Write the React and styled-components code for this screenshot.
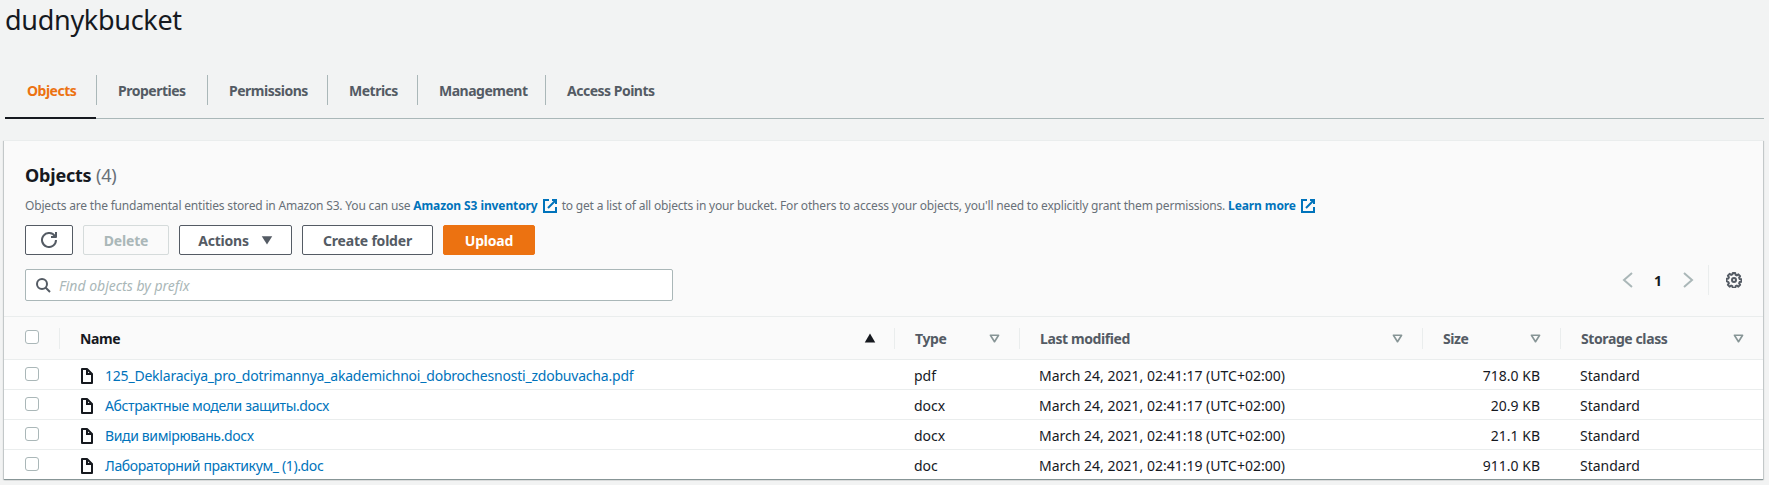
import styled, { createGlobalStyle } from "styled-components";

const GlobalStyle = createGlobalStyle`
  html, body {
    margin: 0;
    padding: 0;
    background: #f2f3f3;
    color: #16191f;
    font-family: "Noto Sans", "Open Sans", sans-serif;
    overflow: hidden;
  }
`;

const Page = styled.div`
  width: 1769px;
  height: 485px;
`;

const Title = styled.h1`
  margin: 0;
  padding-left: 5px;
  height: 64px;
  font-size: 27px;
  line-height: 40px;
  font-weight: 400;
  letter-spacing: -0.3px;
`;

const TabBar = styled.div`
  display: flex;
  margin: 0 5px 21px;
  height: 55px;
  padding-top: 11px;
  box-sizing: border-box;
  border-bottom: 1px solid #aab7b8;
`;

const Tab = styled.div`
  position: relative;
  display: flex;
  align-items: center;
  width: ${(p) => p.$width}px;
  height: 30px;
  padding-left: ${(p) => (p.$first ? 22 : 21)}px;
  box-sizing: border-box;
  font-size: 14px;
  font-weight: 700;
  letter-spacing: -0.5px;
  color: ${(p) => (p.$active ? "#ec7211" : "#545b64")};
  border-right: ${(p) => (p.$last ? "none" : "1px solid #aab7b8")};

  &::after {
    content: "";
    display: ${(p) => (p.$active ? "block" : "none")};
    position: absolute;
    left: 0;
    right: 0;
    bottom: -14px;
    height: 2px;
    background: #16191f;
  }
`;

const Panel = styled.section`
  margin-left: 4px;
  width: 1759px;
  height: 339px;
  box-sizing: border-box;
  background: #fafafa;
  border-top: 1px solid #eaeded;
  box-shadow: 0 1px 1px 0 rgba(0, 28, 36, 0.3), 1px 1px 1px 0 rgba(0, 28, 36, 0.15),
    -1px 1px 1px 0 rgba(0, 28, 36, 0.15);
`;

const PanelHead = styled.div`
  height: 175px;
  padding: 21px 0 0 21px;
  box-sizing: border-box;
`;

const Heading = styled.h2`
  margin: 0;
  font-size: 18px;
  line-height: 26px;
  font-weight: 700;
  letter-spacing: -0.2px;

  span {
    font-weight: 400;
    color: #687078;
  }
`;

const Description = styled.p`
  margin: 9px 0 0;
  display: flex;
  align-items: center;
  height: 18px;
  font-size: 12px;
  line-height: 18px;
  letter-spacing: -0.18px;
  color: #687078;
  white-space: pre;
`;

const LinkText = styled.a`
  color: #0073bb;
  font-weight: 700;
  letter-spacing: -0.1px;
  display: inline-flex;
  align-items: center;
  gap: 4px;
  margin-right: 4px;
`;

const Toolbar = styled.div`
  display: flex;
  gap: 10px;
  margin-top: 10px;
`;

const Button = styled.button`
  display: flex;
  align-items: center;
  justify-content: center;
  gap: 12px;
  width: ${(p) => p.$width}px;
  height: 30px;
  padding: 0;
  border-radius: 2px;
  font-family: inherit;
  font-size: 14px;
  font-weight: 700;
  letter-spacing: -0.2px;
  border: 1px solid ${(p) => (p.$primary ? "#ec7211" : p.$disabled ? "#d5dbdb" : "#545b64")};
  color: ${(p) => (p.$primary ? "#fff" : p.$disabled ? "#aab7b8" : "#545b64")};
  background: ${(p) => (p.$primary ? "#ec7211" : p.$disabled ? "#fafafa" : "#fff")};
`;

const FilterRow = styled.div`
  display: flex;
  align-items: flex-start;
  margin-top: 14px;
`;

const Search = styled.div`
  display: flex;
  align-items: center;
  gap: 8px;
  width: 648px;
  height: 32px;
  padding-left: 9px;
  box-sizing: border-box;
  background: #fff;
  border: 1px solid #aab7b8;
  border-radius: 2px;
  font-size: 14px;
  font-style: italic;
  color: #aab7b8;
`;

const Pager = styled.div`
  display: flex;
  align-items: center;
  margin-left: auto;
  margin-top: -4px;
  padding-right: 21px;
  color: #16191f;
`;

const PageNumber = styled.span`
  width: 44px;
  text-align: center;
  font-size: 14px;
  font-weight: 700;
`;

const PagerDivider = styled.span`
  width: 1px;
  height: 30px;
  margin: 0 17px 0 12px;
  background: #eaeded;
`;

const columns = "55px 835px 125px 403px 138px 1fr";

const HeaderRow = styled.div`
  display: grid;
  grid-template-columns: ${columns};
  height: 42px;
  align-items: center;
  border-top: 1px solid #eaeded;
  border-bottom: 1px solid #eaeded;
  box-sizing: content-box;
`;

const HeaderCell = styled.div`
  display: flex;
  align-items: center;
  justify-content: space-between;
  height: 21px;
  padding: 0 18px 0 20px;
  box-sizing: border-box;
  font-size: 14px;
  font-weight: 700;
  letter-spacing: -0.4px;
  color: ${(p) => (p.$sorted ? "#16191f" : "#545b64")};
  border-left: 1px solid #eaeded;
`;

const CheckCell = styled.div`
  display: flex;
  align-items: center;
  padding-left: 21px;
  height: 100%;
`;

const Checkbox = styled.span`
  width: 14px;
  height: 14px;
  box-sizing: border-box;
  background: #fff;
  border: 1px solid #aab7b8;
  border-radius: 3px;
  margin-top: -3px;
`;

const Row = styled.div`
  display: grid;
  grid-template-columns: ${columns};
  height: 27px;
  padding-top: 2px;
  align-items: center;
  background: #fff;
  border-bottom: 1px solid #eaeded;
  font-size: 14px;
  color: #16191f;

  &:last-child {
    border-bottom: 1px solid #879596;
  }
`;

const NameCell = styled.div`
  display: flex;
  align-items: center;
  gap: 10px;
  padding-left: 20px;
  color: #0073bb;
  letter-spacing: ${(p) => p.$tracking}px;
`;

const Cell = styled.div`
  padding: ${(p) => (p.$right ? "0 20px 0 0" : "0 0 0 20px")};
  text-align: ${(p) => (p.$right ? "right" : "left")};
`;

const Icon = styled.svg`
  flex: none;
  fill: none;
  stroke: ${(p) => p.$color || "currentColor"};
  stroke-width: 2;
`;

const Refresh = () => (
  <Icon width="16" height="16" viewBox="0 0 16 16" $color="#545b64">
    <path d="M10 5h5V0" strokeLinejoin="round" />
    <path d="M15 8a7 7 0 1 1-1.02-3.65" />
  </Icon>
);

const External = () => (
  <Icon width="16" height="16" viewBox="0 0 16 16" $color="#0073bb">
    <path d="M10 2h4v4M6 10l8-8" />
    <path d="M14 9v5H2V2h5" />
  </Icon>
);

const FileIcon = () => (
  <Icon width="16" height="16" viewBox="0 0 16 16" $color="#16191f">
    <path d="M8 1v5h5" />
    <path d="M13 15H3V1h5l5 5v9z" strokeLinejoin="round" />
  </Icon>
);

const Caret = () => (
  <Icon width="13" height="13" viewBox="0 0 16 16" $color="#879596">
    <path d="M3 4h10l-5 8z" strokeLinejoin="round" />
  </Icon>
);

const SortedCaret = () => (
  <svg width="12" height="12" viewBox="0 0 16 16" fill="#16191f">
    <path d="M1 14L8 2l7 12z" />
  </svg>
);

const GearIcon = () => (
  <Icon width="16" height="16" viewBox="0 0 16 16" $color="#545b64">
    <circle cx="8" cy="8" r="2" />
    <path
      d="M6.8 1h2.4l.4 1.9 1.2.5 1.6-1 1.7 1.7-1 1.6.5 1.2 1.9.4v2.4l-1.9.4-.5 1.2 1 1.6-1.7 1.7-1.6-1-1.2.5-.4 1.9H6.8l-.4-1.9-1.2-.5-1.6 1-1.7-1.7 1-1.6-.5-1.2L.5 9.2V6.8l1.9-.4.5-1.2-1-1.6 1.7-1.7 1.6 1 1.2-.5z"
      strokeLinejoin="round"
    />
  </Icon>
);

const Files = [
  ["125_Deklaraciya_pro_dotrimannya_akademichnoi_dobrochesnosti_zdobuvacha.pdf", "pdf", "17", "718.0 KB", -0.21],
  ["Абстрактные модели защиты.docx", "docx", "17", "20.9 KB", -0.37],
  ["Види вимірювань.docx", "docx", "18", "21.1 KB", -0.37],
  ["Лабораторний практикум_ (1).doc", "doc", "19", "911.0 KB", -0.37],
];

const tabs = [
  ["Objects", 92],
  ["Properties", 111],
  ["Permissions", 120],
  ["Metrics", 90],
  ["Management", 128],
  ["Access Points", 160],
];

export default function App() {
  return (
    <Page>
      <GlobalStyle />
      <Title>dudnykbucket</Title>
      <TabBar>
        {tabs.map(([label, width], i) => (
          <Tab key={label} $width={width} $active={i === 0} $first={i === 0} $last={i === tabs.length - 1}>
            {label}
          </Tab>
        ))}
      </TabBar>
      <Panel>
        <PanelHead>
          <Heading>
            Objects <span>(4)</span>
          </Heading>
          <Description>
            {"Objects are the fundamental entities stored in Amazon S3. You can use "}
            <LinkText>
              Amazon S3 inventory
              <External />
            </LinkText>
            {"to get a list of all objects in your bucket. For others to access your objects, you'll need to explicitly grant them permissions. "}
            <LinkText>
              Learn more
              <External />
            </LinkText>
          </Description>
          <Toolbar>
            <Button $width={48}>
              <Refresh />
            </Button>
            <Button $width={86} $disabled>
              Delete
            </Button>
            <Button $width={113}>
              Actions
              <svg width="12" height="12" viewBox="0 0 16 16" fill="#545b64">
                <path d="M1 3h14L8 14z" />
              </svg>
            </Button>
            <Button $width={131}>Create folder</Button>
            <Button $width={92} $primary>
              Upload
            </Button>
          </Toolbar>
          <FilterRow>
            <Search>
              <Icon width="16" height="16" viewBox="0 0 16 16" $color="#545b64">
                <circle cx="7" cy="7" r="5" />
                <path d="M15 15l-4.5-4.5" />
              </Icon>
              Find objects by prefix
            </Search>
            <Pager>
              <Icon width="16" height="20" viewBox="0 0 16 20" $color="#aab7b8">
                <path d="M12 3L4 10l8 7" />
              </Icon>
              <PageNumber>1</PageNumber>
              <Icon width="16" height="20" viewBox="0 0 16 20" $color="#aab7b8">
                <path d="M4 3l8 7-8 7" />
              </Icon>
              <PagerDivider />
              <GearIcon />
            </Pager>
          </FilterRow>
        </PanelHead>
        <HeaderRow>
          <CheckCell>
            <Checkbox />
          </CheckCell>
          <HeaderCell $sorted>
            Name <SortedCaret />
          </HeaderCell>
          <HeaderCell>
            Type <Caret />
          </HeaderCell>
          <HeaderCell>
            Last modified <Caret />
          </HeaderCell>
          <HeaderCell>
            Size <Caret />
          </HeaderCell>
          <HeaderCell>
            Storage class <Caret />
          </HeaderCell>
        </HeaderRow>
        {Files.map(([name, type, sec, size, tracking]) => (
          <Row key={name}>
            <CheckCell>
              <Checkbox />
            </CheckCell>
            <NameCell $tracking={tracking}>
              <FileIcon />
              {name}
            </NameCell>
            <Cell>{type}</Cell>
            <Cell>{`March 24, 2021, 02:41:${sec} (UTC+02:00)`}</Cell>
            <Cell $right>{size}</Cell>
            <Cell>Standard</Cell>
          </Row>
        ))}
      </Panel>
    </Page>
  );
}
